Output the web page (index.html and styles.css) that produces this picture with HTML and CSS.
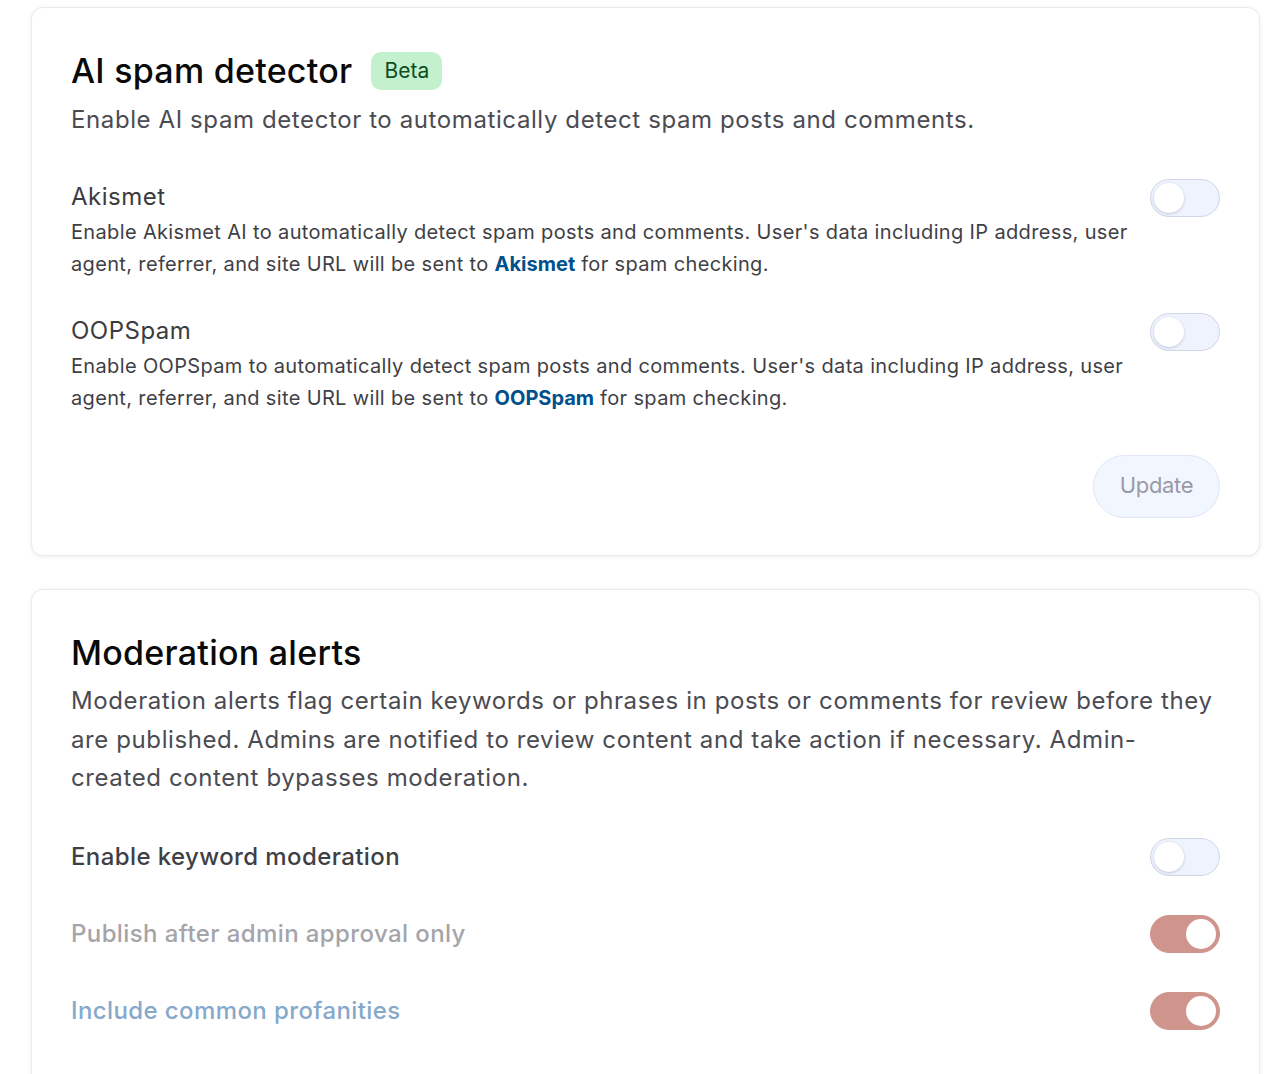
FILE: index.html
```html
<!DOCTYPE html>
<html lang="en">
<head>
<meta charset="utf-8">
<title>Settings</title>
<link rel="stylesheet" href="styles.css">
</head>
<body>
<main class="page">
  <section class="card">
    <div class="card-head">
      <h2 class="card-title">AI spam detector</h2>
      <span class="badge">Beta</span>
    </div>
    <p class="card-desc">Enable AI spam detector to automatically detect spam posts and comments.</p>

    <div class="setting">
      <div class="setting-text">
        <div class="setting-label">Akismet</div>
        <p class="setting-desc">Enable Akismet AI to automatically detect spam posts and comments. User's data including IP address, user agent, referrer, and site URL will be sent to <a class="link" href="#">Akismet</a> for spam checking.</p>
      </div>
      <span class="toggle"><span class="knob"></span></span>
    </div>

    <div class="setting">
      <div class="setting-text">
        <div class="setting-label">OOPSpam</div>
        <p class="setting-desc">Enable OOPSpam to automatically detect spam posts and comments. User's data including IP address, user agent, referrer, and site URL will be sent to <a class="link" href="#">OOPSpam</a> for spam checking.</p>
      </div>
      <span class="toggle"><span class="knob"></span></span>
    </div>

    <div class="actions">
      <button class="btn" type="button">Update</button>
    </div>
  </section>

  <section class="card card-mod">
    <h2 class="card-title">Moderation alerts</h2>
    <p class="card-desc mod-desc">Moderation alerts flag certain keywords or phrases in posts or comments for review before they are published. Admins are notified to review content and take action if necessary. Admin-created content bypasses moderation.</p>

    <div class="rows">
      <div class="row">
        <span class="row-label">Enable keyword moderation</span>
        <span class="toggle"><span class="knob"></span></span>
      </div>
      <div class="row">
        <span class="row-label muted">Publish after admin approval only</span>
        <span class="toggle on"><span class="knob"></span></span>
      </div>
      <div class="row">
        <span class="row-label faded-link">Include common profanities</span>
        <span class="toggle on"><span class="knob"></span></span>
      </div>
    </div>
  </section>
</main>
</body>
</html>
```

FILE: styles.css
```css
* { box-sizing: border-box; }

html, body {
  margin: 0;
  padding: 0;
  background: #ffffff;
}

body {
  font-family: "Inter", "Noto Sans", "Liberation Sans", sans-serif;
  color: #111;
  height: 1074px;
  overflow: hidden;
}

.page {
  padding: 7px 22px 0 31px;
  display: flex;
  flex-direction: column;
  gap: 33px;
}

.card {
  background: #fff;
  border: 1px solid #ebebeb;
  border-radius: 12px;
  box-shadow: 0 1px 4px rgba(0, 0, 0, 0.08);
  padding: 43px 39px 37px 39px;
}

.card-head {
  display: flex;
  align-items: center;
  gap: 19px;
}

.card-title {
  margin: 0;
  font-size: 34px;
  line-height: 40px;
  font-weight: 500;
  color: #0a0a0a;
  letter-spacing: 0.25px;
}

.badge {
  display: inline-block;
  background: #c3f0cd;
  color: #0f4d23;
  font-size: 21px;
  line-height: 38px;
  height: 38px;
  padding: 0 13px;
  border-radius: 10px;
}

.card-desc {
  margin: 13px 0 0 0;
  font-size: 24px;
  line-height: 32px;
  color: #4b4b52;
  letter-spacing: 0.6px;
}

.setting {
  display: flex;
  align-items: flex-start;
  justify-content: space-between;
  gap: 20px;
  margin-top: 45px;
}

.setting + .setting { margin-top: 35px; }

.setting-text { flex: 1; max-width: 1062px; }

.setting-label {
  font-size: 24px;
  line-height: 32px;
  color: #3b3b40;
  letter-spacing: 0.5px;
}

.setting-desc {
  margin: 3px 0 0 0;
  font-size: 20px;
  line-height: 32px;
  color: #3f3f46;
  letter-spacing: 0.35px;
}

.link {
  color: #00508c;
  font-weight: 700;
  text-decoration: none;
  letter-spacing: 0;
}

.toggle {
  flex: none;
  position: relative;
  display: inline-block;
  width: 70px;
  height: 38px;
  border-radius: 19px;
  background: #eef3fd;
  border: 1px solid #cfd6e6;
  margin-top: -2px;
}

.toggle .knob {
  position: absolute;
  top: 3px;
  left: 3px;
  width: 30px;
  height: 30px;
  border-radius: 50%;
  background: #fff;
  box-shadow: 0 1px 3px rgba(60, 70, 100, 0.25);
}

.toggle.on {
  background: #cf958d;
  border-color: #cf958d;
}

.toggle.on .knob {
  left: auto;
  right: 3px;
  box-shadow: none;
}

.actions {
  display: flex;
  justify-content: flex-end;
  margin-top: 41px;
}

.btn {
  font-family: inherit;
  font-size: 22px;
  line-height: 1;
  padding: 0 0 3px 0;
  color: #9a9aa6;
  background: #f2f6fe;
  border: 1px solid #dfe6f4;
  border-radius: 32px;
  width: 127px;
  height: 63px;
  letter-spacing: -0.3px;
}

.card-mod {
  padding-top: 43px;
  min-height: 600px;
}

.mod-desc {
  margin-top: 9px;
  line-height: 38.5px;
}

.rows {
  margin-top: 40px;
  display: flex;
  flex-direction: column;
  gap: 39px;
}

.row {
  display: flex;
  align-items: center;
  justify-content: space-between;
  height: 38px;
}

.row .toggle { margin-top: 0; }

.row-label {
  font-size: 24px;
  line-height: 32px;
  font-weight: 500;
  color: #3f3f46;
  letter-spacing: 0.4px;
}

.row-label.muted { color: #a4a4aa; }
.row-label.faded-link { color: #86a9cb; }
```
